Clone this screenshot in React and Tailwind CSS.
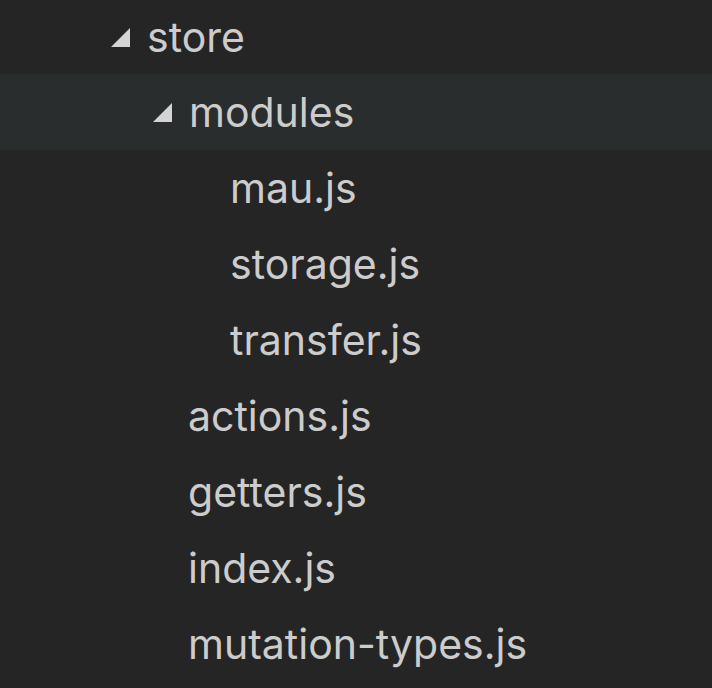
const rows = [
  { name: 'store', depth: 0, folder: true },
  { name: 'modules', depth: 1, folder: true, active: true },
  { name: 'mau.js', depth: 2 },
  { name: 'storage.js', depth: 2 },
  { name: 'transfer.js', depth: 2 },
  { name: 'actions.js', depth: 1 },
  { name: 'getters.js', depth: 1 },
  { name: 'index.js', depth: 1 },
  { name: 'mutation-types.js', depth: 1 },
];

function Twisty() {
  return (
    <svg className="w-[19px] h-[19px] mr-[17px] shrink-0" viewBox="0 0 19 19">
      <path d="M19 0 L19 19 L0 19 Z" fill="#d4d4d4" />
    </svg>
  );
}

function padFor(row) {
  if (row.folder) return row.depth === 0 ? 'pl-[111px]' : 'pl-[153px]';
  return row.depth === 2 ? 'pl-[230px]' : 'pl-[188px]';
}

export default function App() {
  return (
    <div className="w-[712px] h-[688px] bg-[#252526] overflow-hidden" style={{ fontFamily: 'Inter, "Noto Sans", sans-serif' }}>
      {rows.map((row, i) => (
        <div
          key={row.name}
          className={`${i === 0 ? 'h-[74px]' : 'h-[76px]'} flex items-center ${row.active ? 'bg-[#2a2d2e]' : ''} ${padFor(row)}`}
        >
          {row.folder && <Twisty />}
          <span className="text-[41px] text-[#cccccc] leading-none">{row.name}</span>
        </div>
      ))}
    </div>
  );
}
